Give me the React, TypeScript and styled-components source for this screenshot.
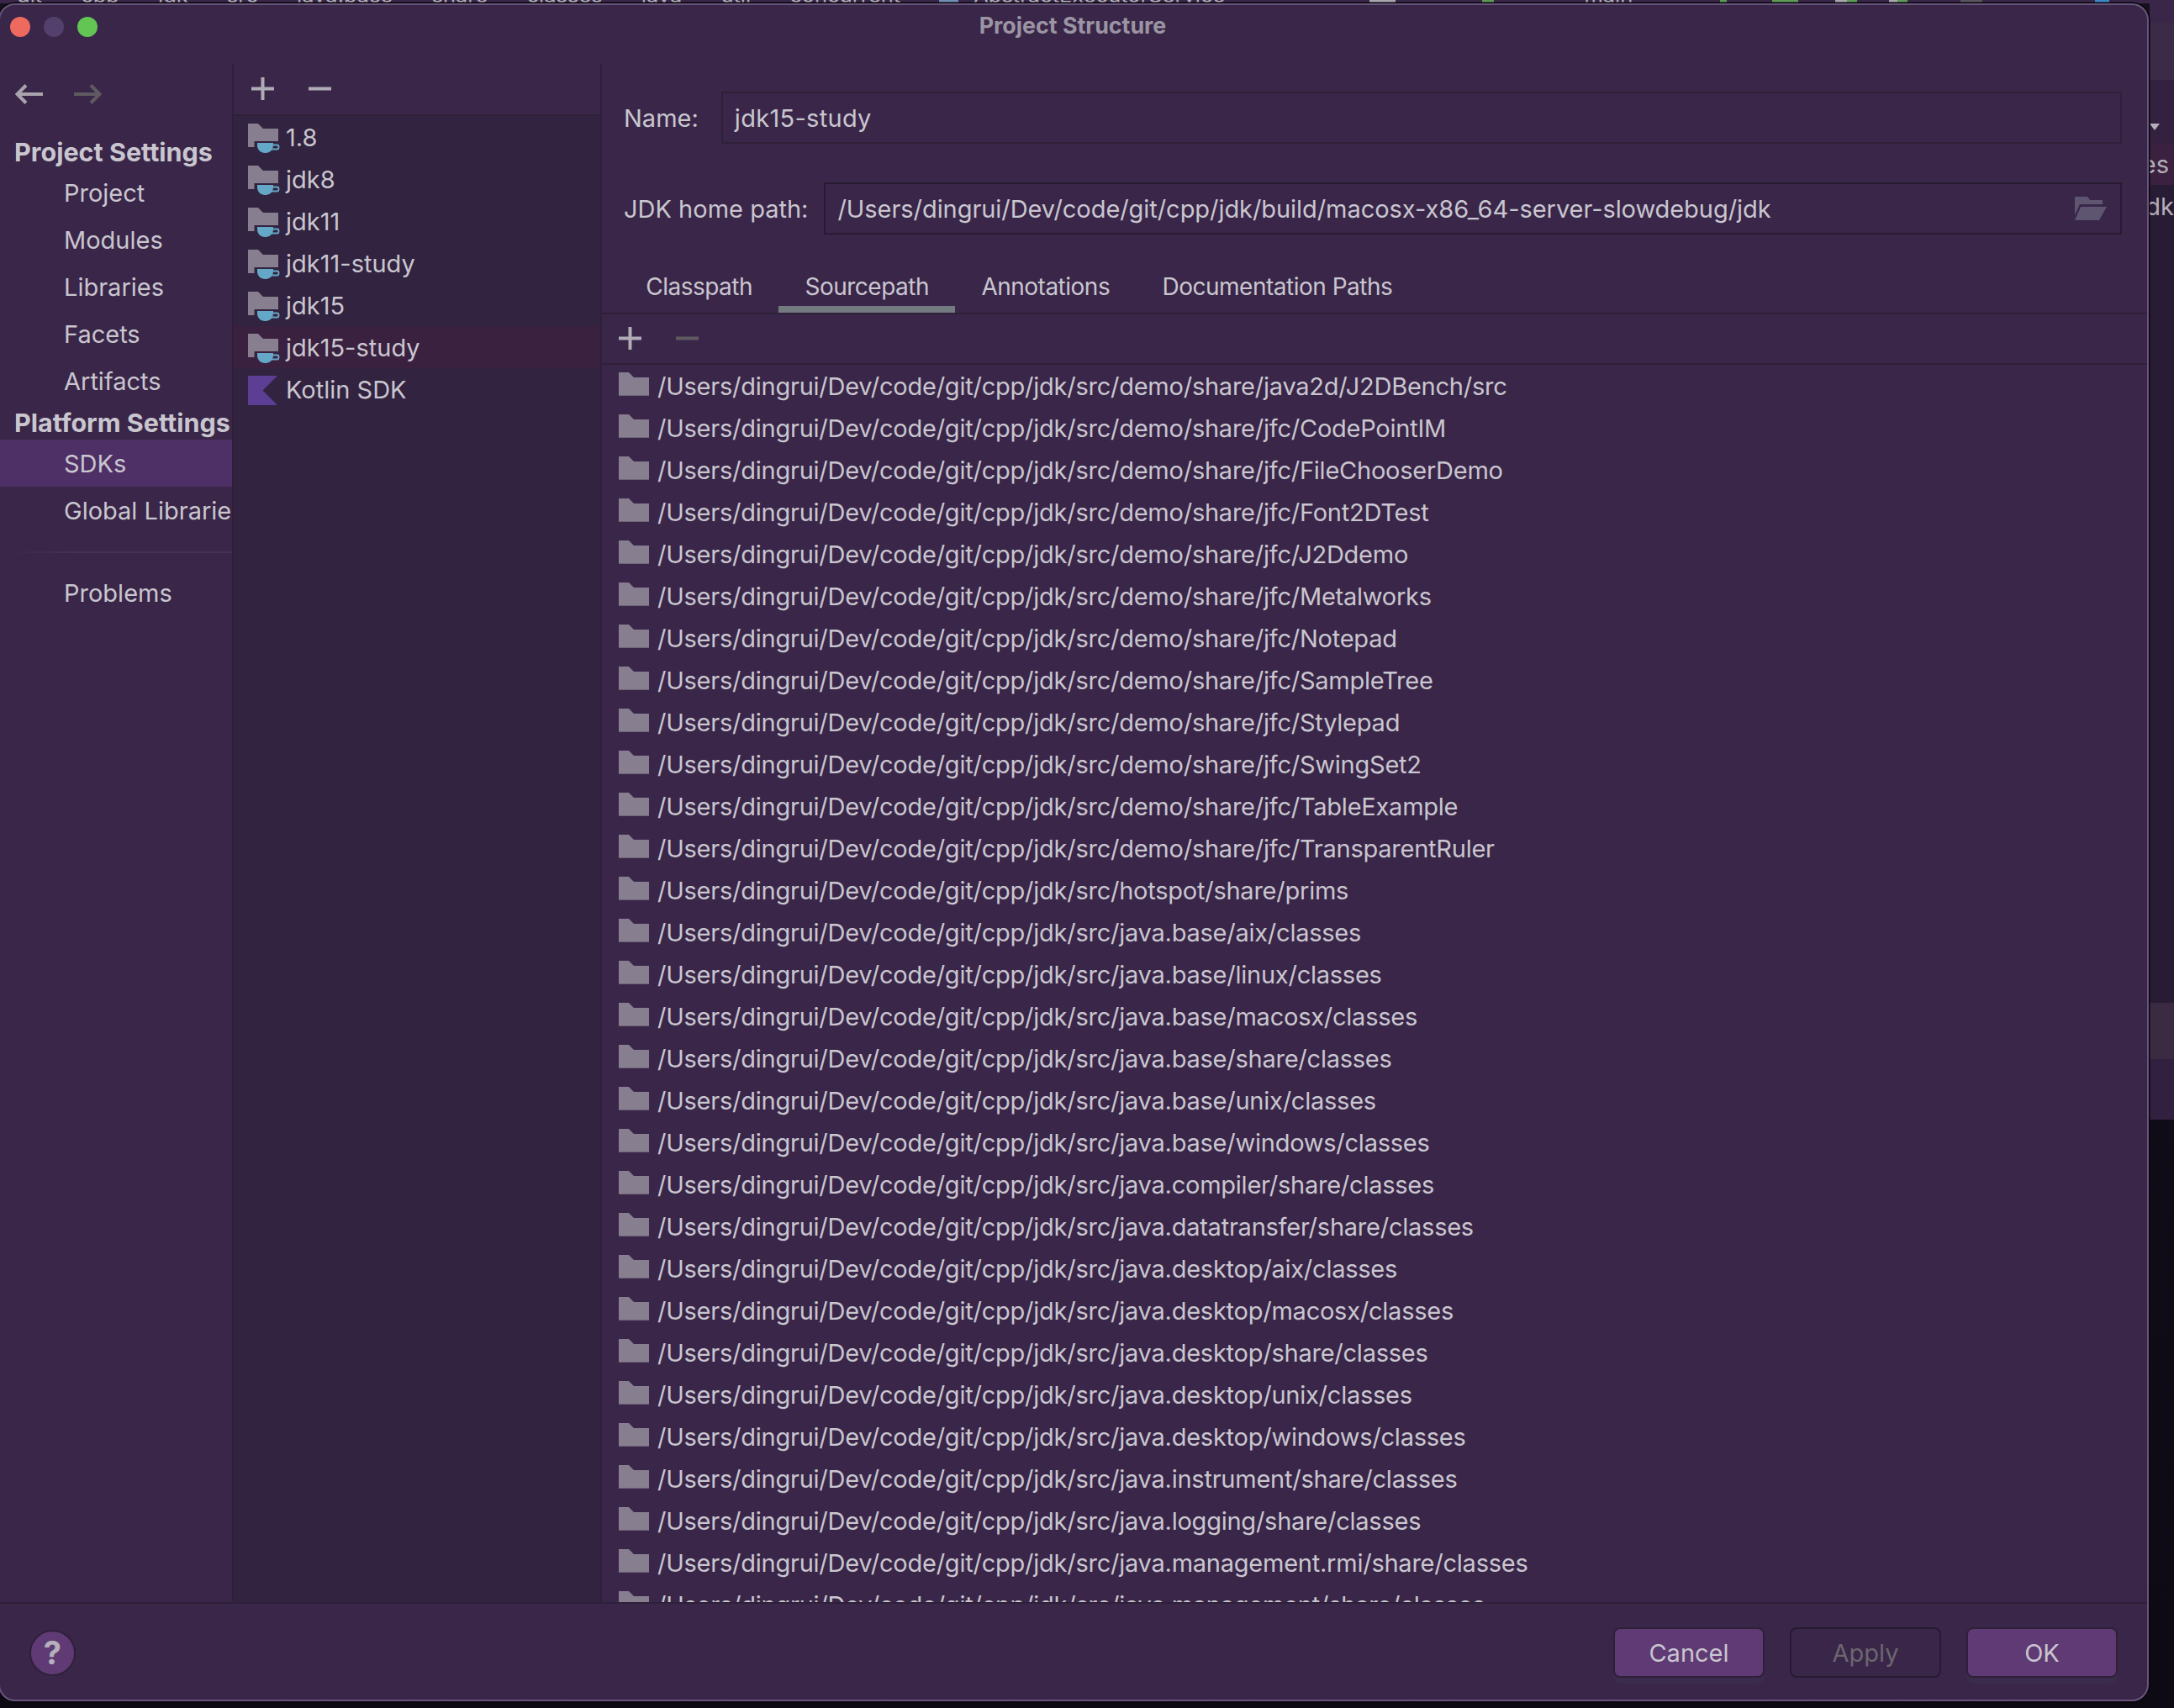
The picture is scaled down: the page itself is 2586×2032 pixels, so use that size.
import React from "react";
import styled, { createGlobalStyle } from "styled-components";

const colors = {
  main: "#3a2649",
  list: "#322340",
  line: "#2f2039",
  lineDark: "#271a33",
  text: "#c9c6cf",
  icon: "#b0acb5",
  dim: "#5f5a62",
  folder: "#877e90",
  button: "#5f3a75",
  selected: "#4e2f66",
  selectedRow: "#3b2140",
};

const GlobalStyle = createGlobalStyle`
  html, body {
    margin: 0;
    padding: 0;
    background: #0d0a14;
  }
  body {
    font-family: Inter, Roboto, "Liberation Sans", sans-serif;
    font-size: 29px;
    color: ${colors.text};
  }
`;

const crumbs = ["git", "cpp", "jdk", "src", "java.base", "share", "classes", "java", "util", "concurrent"];
const sdks = ["1.8", "jdk8", "jdk11", "jdk11-study", "jdk15", "jdk15-study"];
const tabs = ["Classpath", "Sourcepath", "Annotations", "Documentation Paths"];

const root = "/Users/dingrui/Dev/code/git/cpp/jdk/src/";
const sourcePaths = [
  "demo/share/java2d/J2DBench/src",
  "demo/share/jfc/CodePointIM",
  "demo/share/jfc/FileChooserDemo",
  "demo/share/jfc/Font2DTest",
  "demo/share/jfc/J2Ddemo",
  "demo/share/jfc/Metalworks",
  "demo/share/jfc/Notepad",
  "demo/share/jfc/SampleTree",
  "demo/share/jfc/Stylepad",
  "demo/share/jfc/SwingSet2",
  "demo/share/jfc/TableExample",
  "demo/share/jfc/TransparentRuler",
  "hotspot/share/prims",
  "java.base/aix/classes",
  "java.base/linux/classes",
  "java.base/macosx/classes",
  "java.base/share/classes",
  "java.base/unix/classes",
  "java.base/windows/classes",
  "java.compiler/share/classes",
  "java.datatransfer/share/classes",
  "java.desktop/aix/classes",
  "java.desktop/macosx/classes",
  "java.desktop/share/classes",
  "java.desktop/unix/classes",
  "java.desktop/windows/classes",
  "java.instrument/share/classes",
  "java.logging/share/classes",
  "java.management.rmi/share/classes",
  "java.management/share/classes",
];

const PlusIcon = ({ color = colors.icon }: { color?: string }) => (
  <svg width="27" height="27" viewBox="0 0 27 27">
    <path d="M13.5 0V27M0 13.5H27" stroke={color} strokeWidth="4" fill="none" />
  </svg>
);

const MinusIcon = ({ color = colors.icon }: { color?: string }) => (
  <svg width="27" height="27" viewBox="0 0 27 27">
    <path d="M0 13.5H27" stroke={color} strokeWidth="4" fill="none" />
  </svg>
);

const ArrowIcon = ({ flip, color }: { flip?: boolean; color: string }) => (
  <svg width="33" height="24" viewBox="0 0 33 24" style={flip ? { transform: "scaleX(-1)" } : undefined}>
    <path d="M33 12H3M13 1.5L2.5 12L13 22.5" stroke={color} strokeWidth="4" fill="none" />
  </svg>
);

const FolderIcon = () => (
  <svg width="36" height="28" viewBox="0 0 36 28">
    <path d="M0 0H12L18 6H36V28H0Z" fill={colors.folder} />
    <path d="M0 27H36V28H0Z" fill="#6f6579" />
  </svg>
);

const SdkIcon = () => (
  <svg width="38" height="36" viewBox="0 0 38 36">
    <path d="M0 0H12L18 6H36V21H7.5V28H0Z" fill={colors.folder} />
    <path d="M11 23H30V26C30 31 26 35 21 35H20C15 35 11 31 11 26Z" fill="#65a7c6" />
    <path d="M30 25.5H35C37 25.5 37 30.5 35 30.5H28" stroke="#65a7c6" strokeWidth="1.9" fill="none" />
  </svg>
);

const KotlinIcon = () => (
  <svg width="38" height="36" viewBox="0 0 38 36">
    <path d="M0 0H35L17.5 17.5L35 35H0Z" fill="#5c3f94" />
  </svg>
);

const OpenFolderIcon = () => (
  <svg width="38" height="28" viewBox="0 0 38 28">
    <path d="M0 0H15L18 4H33V9H6L0 22Z" fill="#5e5570" />
    <path d="M7 12H38L29 28H0Z" fill="#5e5570" />
  </svg>
);

const Stage = styled.div`
  position: relative;
  width: 2586px;
  height: 2032px;
  overflow: hidden;
  background: linear-gradient(#17111d, #0d0a14);
`;

const Backdrop = styled.div`
  display: flex;
  flex-direction: column;
  height: 100%;
`;

const Breadcrumbs = styled.div`
  display: flex;
  align-items: flex-end;
  height: 4px;
  padding-left: 20px;
  overflow: hidden;
  background: #3a2649;
  font-size: 25.5px;
  line-height: 26px;
  color: #b5b1ba;
`;

const Crumb = styled.span<{ $left?: number }>`
  flex: none;
  margin: 0 46px -3px ${(p) => p.$left ?? 0}px;
`;

const Chip = styled.i<{ $left: number; $width: number; $color: string }>`
  flex: none;
  width: ${(p) => p.$width}px;
  height: 4px;
  margin-left: ${(p) => p.$left}px;
  background: ${(p) => p.$color};
`;

const SideStrip = styled.div`
  display: flex;
  flex-direction: column;
  width: 29px;
  margin-left: auto;
`;

const StripCell = styled.div<{ $height: number; $color: string }>`
  display: flex;
  align-items: center;
  justify-content: flex-end;
  height: ${(p) => p.$height}px;
  overflow: hidden;
  background: ${(p) => p.$color};
  white-space: nowrap;
  color: #b3aeb8;
`;

const StripText = styled.span<{ $pad: number }>`
  flex: none;
  margin-right: ${(p) => p.$pad}px;
`;

const StripArrow = styled.svg`
  margin: 34px 11px 0 0;
`;

const Window = styled.div`
  position: absolute;
  left: -2px;
  top: 4px;
  box-sizing: border-box;
  width: 2558px;
  height: 2020px;
  display: flex;
  flex-direction: column;
  overflow: hidden;
  border: 2px solid #66547a;
  border-radius: 20px;
  background: ${colors.main};
  box-shadow: 0 0 0 1.5px #08060c;
`;

const TitleBar = styled.header`
  position: relative;
  flex: none;
  height: 70px;
  display: flex;
  justify-content: center;
  padding: 9px 2px 0 0;
  box-sizing: border-box;
  font-size: 26.8px;
  line-height: 30px;
  font-weight: 700;
  color: #9b95a3;
`;

const Lights = styled.div`
  position: absolute;
  left: 12px;
  top: 14px;
  display: flex;
  gap: 16px;
`;

const Light = styled.span<{ $color: string }>`
  width: 24px;
  height: 24px;
  border-radius: 50%;
  background: ${(p) => p.$color};
`;

const Body = styled.div`
  flex: 1;
  min-height: 0;
  display: flex;
`;

const Sidebar = styled.nav`
  flex: none;
  width: 276px;
  overflow: hidden;
  white-space: nowrap;
`;

const NavArrows = styled.div`
  display: flex;
  gap: 37px;
  height: 84px;
  padding: 24px 0 0 18px;
  box-sizing: border-box;
`;

const SectionTitle = styled.div<{ $height: number }>`
  display: flex;
  align-items: center;
  height: ${(p) => p.$height}px;
  padding-left: 17px;
  font-size: 30.5px;
  font-weight: 700;
`;

const NavItem = styled.div<{ $active?: boolean }>`
  display: flex;
  align-items: center;
  height: 56px;
  padding-left: 76px;
  background: ${(p) => (p.$active ? colors.selected : "transparent")};
`;

const NavDivider = styled.div`
  height: 2px;
  margin: 21px 0 19px 10px;
  background: linear-gradient(90deg, ${colors.main}, #443356 30%);
`;

const SdkPane = styled.section`
  flex: none;
  width: 440px;
  box-sizing: border-box;
  border-left: 2px solid ${colors.line};
  border-right: 2px solid ${colors.line};
  display: flex;
  flex-direction: column;
`;

const SdkToolbar = styled.div`
  flex: none;
  height: 62px;
  box-sizing: border-box;
  border-bottom: 2px solid ${colors.line};
  display: flex;
  align-items: center;
  gap: 41px;
  padding: 0 0 2px 21px;
`;

const SdkList = styled.div`
  flex: 1;
  background: ${colors.list};
`;

const SdkRow = styled.div<{ $selected?: boolean }>`
  display: flex;
  align-items: center;
  gap: 7px;
  height: 50px;
  padding: 0 0 0 17px;
  background: ${(p) => (p.$selected ? colors.selectedRow : "transparent")};
  & > svg {
    margin-top: 3px;
  }
`;

const DetailPane = styled.section`
  flex: 1;
  min-width: 0;
  display: flex;
  flex-direction: column;
`;

const FieldRow = styled.div<{ $top: number; $gap: number }>`
  flex: none;
  display: flex;
  align-items: center;
  gap: ${(p) => p.$gap}px;
  margin-top: ${(p) => p.$top}px;
  padding: 0 30px 0 26px;
`;

const FieldBox = styled.div<{ $strong?: boolean }>`
  flex: 1;
  height: 62px;
  box-sizing: border-box;
  display: flex;
  align-items: center;
  justify-content: space-between;
  padding: 0 16px 0 14px;
  border: 2px solid ${(p) => (p.$strong ? colors.lineDark : colors.line)};
  letter-spacing: ${(p) => (p.$strong ? "-0.06px" : "0.3px")};
`;

const TabStrip = styled.div`
  flex: none;
  display: flex;
  height: 64px;
  margin-top: 31px;
  padding-left: 21px;
  box-sizing: border-box;
  border-bottom: 2px solid ${colors.line};
`;

const Tab = styled.div<{ $active?: boolean }>`
  display: flex;
  align-items: center;
  height: 62px;
  box-sizing: border-box;
  padding: 8px 31.2px 0;
  border-bottom: 8px solid ${(p) => (p.$active ? "#737a80" : "transparent")};
  font-size: 28px;
  letter-spacing: -0.5px;
`;

const PathToolbar = styled.div`
  flex: none;
  height: 60px;
  box-sizing: border-box;
  border-bottom: 2px solid ${colors.line};
  display: flex;
  align-items: center;
  gap: 41px;
  padding: 0 0 2px 20px;
`;

const PathList = styled.div`
  flex: 1;
  min-height: 0;
  overflow: hidden;
`;

const PathRow = styled.div`
  display: flex;
  align-items: center;
  gap: 10px;
  height: 50px;
  padding-left: 20px;
  white-space: nowrap;
  letter-spacing: -0.24px;
  & > svg {
    margin-top: -5px;
  }
`;

const Footer = styled.footer`
  flex: none;
  height: 116px;
  box-sizing: border-box;
  border-top: 2px solid ${colors.line};
  display: flex;
  align-items: center;
  justify-content: space-between;
  padding: 2px 35px 0 35px;
`;

const HelpButton = styled.div`
  width: 55px;
  height: 55px;
  box-sizing: border-box;
  display: flex;
  align-items: center;
  justify-content: center;
  border: 2px solid ${colors.line};
  border-radius: 50%;
  background: ${colors.button};
  font-size: 38px;
  font-weight: 700;
  color: #b5b1ba;
`;

const ButtonGroup = styled.div`
  display: flex;
  gap: 30px;
`;

const DialogButton = styled.div<{ $disabled?: boolean }>`
  width: 180px;
  height: 60px;
  box-sizing: border-box;
  display: flex;
  align-items: center;
  justify-content: center;
  border: 2px solid ${(p) => (p.$disabled ? colors.lineDark : colors.line)};
  border-radius: 8px;
  background: ${(p) => (p.$disabled ? colors.main : colors.button)};
  color: ${(p) => (p.$disabled ? "#6b6770" : colors.text)};
  box-shadow: ${(p) => (p.$disabled ? "none" : "0 7px 0 #3b2b4c")};
`;

export default function App() {
  return (
    <Stage>
      <GlobalStyle />
      <Backdrop>
        <Breadcrumbs>
          {crumbs.map((c) => (
            <Crumb key={c}>{c}</Crumb>
          ))}
          <Chip $left={0} $width={23} $color="#6f8fb5" />
          <Crumb $left={18}>AbstractExecutorService</Crumb>
          <Chip $left={126} $width={31} $color="#aaa6ad" />
          <Chip $left={103} $width={14} $color="#5d9b57" />
          <Crumb $left={107}>main</Crumb>
          <Chip $left={58} $width={8} $color="#5d9b57" />
          <Chip $left={54} $width={31} $color="#5d9b57" />
          <Chip $left={44} $width={14} $color="#aaa6ad" />
          <Chip $left={0} $width={12} $color="#5d9b57" />
          <Chip $left={38} $width={10} $color="#aaa6ad" />
          <Chip $left={0} $width={12} $color="#5d9b57" />
          <Chip $left={63} $width={26} $color="#5a5560" />
          <Chip $left={134} $width={17} $color="#3f87c9" />
        </Breadcrumbs>
        <SideStrip>
          <StripCell $height={23} $color="#3a2649" />
          <StripCell $height={68} $color="#3c2b46" />
          <StripCell $height={75} $color="#33213f">
            <StripArrow width="18" height="22" viewBox="0 0 18 22">
              <path d="M0 8H12L6 16Z" fill="#b3aeb8" />
            </StripArrow>
          </StripCell>
          <StripCell $height={50} $color="#3a2140">
            <StripText $pad={6}>classes</StripText>
          </StripCell>
          <StripCell $height={50} $color="#281b34">
            <StripText $pad={0}>jdk</StripText>
          </StripCell>
          <StripCell $height={923} $color="#281b34" />
          <StripCell $height={67} $color="#3a2a42" />
          <StripCell $height={72} $color="#31203f" />
        </SideStrip>
      </Backdrop>

      <Window>
        <TitleBar>
          <Lights>
            <Light $color="#ee6a5f" />
            <Light $color="#54406c" />
            <Light $color="#62c554" />
          </Lights>
          Project Structure
        </TitleBar>

        <Body>
          <Sidebar>
            <NavArrows>
              <ArrowIcon color="#a8a3ad" />
              <ArrowIcon flip color={colors.dim} />
            </NavArrows>
            <SectionTitle $height={41}>Project Settings</SectionTitle>
            <NavItem>Project</NavItem>
            <NavItem>Modules</NavItem>
            <NavItem>Libraries</NavItem>
            <NavItem>Facets</NavItem>
            <NavItem>Artifacts</NavItem>
            <SectionTitle $height={42}>Platform Settings</SectionTitle>
            <NavItem $active>SDKs</NavItem>
            <NavItem>Global Libraries</NavItem>
            <NavDivider />
            <NavItem>Problems</NavItem>
          </Sidebar>

          <SdkPane>
            <SdkToolbar>
              <PlusIcon />
              <MinusIcon />
            </SdkToolbar>
            <SdkList>
              {sdks.map((name) => (
                <SdkRow key={name} $selected={name === "jdk15-study"}>
                  <SdkIcon />
                  {name}
                </SdkRow>
              ))}
              <SdkRow>
                <KotlinIcon />
                Kotlin SDK
              </SdkRow>
            </SdkList>
          </SdkPane>

          <DetailPane>
            <FieldRow $top={33} $gap={27}>
              Name:
              <FieldBox>jdk15-study</FieldBox>
            </FieldRow>
            <FieldRow $top={46} $gap={19}>
              JDK home path:
              <FieldBox $strong>
                /Users/dingrui/Dev/code/git/cpp/jdk/build/macosx-x86_64-server-slowdebug/jdk
                <OpenFolderIcon />
              </FieldBox>
            </FieldRow>
            <TabStrip>
              {tabs.map((t) => (
                <Tab key={t} $active={t === "Sourcepath"}>
                  {t}
                </Tab>
              ))}
            </TabStrip>
            <PathToolbar>
              <PlusIcon />
              <MinusIcon color={colors.dim} />
            </PathToolbar>
            <PathList>
              {sourcePaths.map((p) => (
                <PathRow key={p}>
                  <FolderIcon />
                  {root + p}
                </PathRow>
              ))}
            </PathList>
          </DetailPane>
        </Body>

        <Footer>
          <HelpButton>?</HelpButton>
          <ButtonGroup>
            <DialogButton>Cancel</DialogButton>
            <DialogButton $disabled>Apply</DialogButton>
            <DialogButton>OK</DialogButton>
          </ButtonGroup>
        </Footer>
      </Window>
    </Stage>
  );
}
